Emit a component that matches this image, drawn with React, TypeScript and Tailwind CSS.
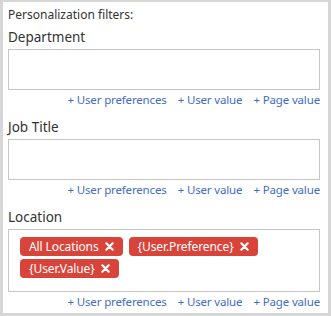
import { Fragment } from "react";

const tags = ["All Locations", "{User.Preference}", "{User.Value}"];

function Links() {
  return (
    <div className="mt-0.5 flex justify-end gap-[11px] text-[11.5px] leading-4 tracking-[-0.15px] text-[#3f6bc9]">
      <span>+ User preferences</span>
      <span>+ User value</span>
      <span>+ Page value</span>
    </div>
  );
}

function Field({ label, children }: { label: string; children?: React.ReactNode }) {
  return (
    <div>
      <div className="h-5 text-[13.5px] leading-5 text-[#333]">{label}</div>
      <div
        className={
          "mt-0.5 border border-[#c6c6c6] bg-white " +
          (children ? "h-[63px] px-[11px] pt-[7px]" : "h-[41px]")
        }
      >
        {children}
      </div>
      <Links />
    </div>
  );
}

export default function App() {
  return (
    <div className="h-[316px] w-[331px] border-[3px] border-t-2 border-[#d6d6d6] bg-white pl-[5px] pr-2 pt-[5px] font-['Noto_Sans',sans-serif]">
      <div className="text-[12px] leading-4 text-[#333]">Personalization filters:</div>
      <div className="mt-1 flex flex-col gap-[9px]">
        <Field label="Department" />
        <Field label="Job Title" />
        <Field label="Location">
          <div className="flex flex-wrap gap-x-[6px] gap-y-[3px]">
            {tags.map((t) => (
              <Fragment key={t}>
                <span className="flex h-[19px] items-center gap-[6px] rounded-[4px] bg-[#d9443a] px-[9px] text-[12px] leading-4 tracking-[-0.1px] text-white">
                  {t}
                  <svg width="9" height="9" viewBox="0 0 10 10">
                    <path d="M1.5 1.5 L8.5 8.5 M8.5 1.5 L1.5 8.5" stroke="white" strokeWidth="2.4" strokeLinecap="round" />
                  </svg>
                </span>
              </Fragment>
            ))}
          </div>
        </Field>
      </div>
    </div>
  );
}
